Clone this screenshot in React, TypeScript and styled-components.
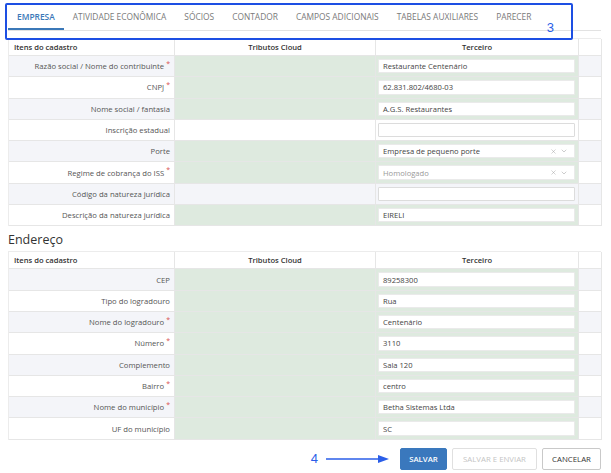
import React from "react";
import styled, { createGlobalStyle, css } from "styled-components";
import { X, ChevronDown } from "lucide-react";

const Global = createGlobalStyle`
  html, body { margin: 0; padding: 0; background: #fff; }
  body { font-family: "Open Sans", "Liberation Sans", sans-serif; color: #444; }
`;

const Page = styled.div`
  position: relative;
  width: 611px;
  padding: 0 10px 0 8px;
  box-sizing: border-box;
`;

const TabBar = styled.div`
  display: flex;
  height: 30px;
  border-bottom: 1px solid #e2e2e2;
  box-sizing: content-box;
`;

const Tab = styled.div<{ $active?: boolean }>`
  padding: 10px 9px 0;
  height: 30px;
  box-sizing: border-box;
  font-size: 8.4px;
  line-height: 14px;
  text-transform: uppercase;
  white-space: nowrap;
  color: ${(p) => (p.$active ? "#3b78b8" : "#7a7a7a")};
  font-weight: ${(p) => (p.$active ? 600 : 400)};
  border-bottom: 2px solid ${(p) => (p.$active ? "#3b78b8" : "transparent")};
  margin-bottom: -1px;
`;

const Annot = styled.div`
  position: absolute;
  left: 5px;
  top: 3px;
  width: 568px;
  height: 37px;
  border: 2px solid #1d4fe3;
  border-radius: 2px;
  box-sizing: border-box;
  pointer-events: none;
`;

const AnnotNum = styled.span`
  position: absolute;
  right: 17px;
  top: 15px;
  font-family: "Liberation Sans", sans-serif;
  font-size: 13px;
  color: #2a5ee8;
`;

const Table = styled.div<{ $top: number }>`
  margin-top: ${(p) => p.$top}px;
  display: grid;
  grid-template-columns: 166px 201px 203px 23px;
  border-left: 1px solid #ececec;
  border-top: 1px solid #ececec;
`;

const HeadCell = styled.div<{ $align?: string }>`
  height: 17px;
  box-sizing: border-box;
  display: flex;
  align-items: center;
  justify-content: ${(p) => p.$align || "center"};
  padding: 0 5px;
  font-size: 7.6px;
  font-weight: 600;
  color: #333;
  border-right: 1px solid #e6e6e6;
  border-bottom: 1px solid #e6e6e6;
  white-space: nowrap;
`;

const cellBase = css`
  height: 21.3px;
  box-sizing: border-box;
  border-right: 1px solid #e6e6e6;
  border-bottom: 1px solid #e6e6e6;
`;

const LabelCell = styled.div<{ $stripe: boolean }>`
  ${cellBase}
  background: ${(p) => (p.$stripe ? "#f4f5f9" : "#fff")};
  display: flex;
  align-items: center;
  justify-content: flex-end;
  padding-right: 4px;
  font-size: 7.7px;
  color: #555;
  white-space: nowrap;
`;

const Req = styled.span`
  color: #d9534f;
  font-size: 7px;
  margin-left: 2px;
  align-self: flex-start;
  margin-top: 3px;
`;

const fill = (green: boolean, stripe: boolean) =>
  green ? "#deeadf" : stripe ? "#f4f5f9" : "#fff";

const SourceCell = styled.div<{ $green: boolean; $stripe: boolean }>`
  ${cellBase}
  background: ${(p) => fill(p.$green, p.$stripe)};
`;

const ValueCell = styled.div<{ $green: boolean; $stripe: boolean }>`
  ${cellBase}
  background: ${(p) => fill(p.$green, p.$stripe)};
  padding: 3px 3px 3px 2px;
  display: flex;
`;

const ExtraCell = styled.div<{ $stripe: boolean }>`
  ${cellBase}
  background: ${(p) => (p.$stripe ? "#f4f5f9" : "#fff")};
`;

const Field = styled.div<{ $muted?: boolean; $strong?: boolean }>`
  flex: 1;
  display: flex;
  align-items: center;
  background: #fff;
  border: 1px solid ${(p) => (p.$strong ? "#dcdcdc" : "#eaeaea")};
  border-radius: 1px;
  padding: 0 4px;
  font-size: 7.6px;
  color: ${(p) => (p.$muted ? "#999" : "#444")};
  white-space: nowrap;
`;

const FieldText = styled.span`
  flex: 1;
`;

const Icons = styled.span`
  display: flex;
  align-items: center;
  gap: 3px;
  color: #9a9a9a;
  padding-right: 2px;
`;

const SectionTitle = styled.div`
  font-size: 12.5px;
  color: #333;
  height: 25px;
  line-height: 27px;
`;

const Footer = styled.div`
  display: flex;
  justify-content: flex-end;
  align-items: center;
  margin-top: 8px;
  gap: 5px;
`;

const Btn = styled.button<{ $variant: "primary" | "disabled" | "default" }>`
  height: 22px;
  box-sizing: border-box;
  padding: 0 6px;
  font-family: "Open Sans", "Liberation Sans", sans-serif;
  font-size: 7.8px;
  text-transform: uppercase;
  border-radius: 2px;
  cursor: pointer;
  ${(p) =>
    p.$variant === "primary"
      ? css`
          background: #3a78bd;
          border: 1px solid #3a78bd;
          color: #fff;
          font-weight: 600;
          width: 47px;
        `
      : p.$variant === "disabled"
      ? css`
          background: #fff;
          border: 1px solid #e0e0e0;
          color: #c4c4c4;
          width: 85px;
        `
      : css`
          background: #fff;
          border: 1px solid #c9c9c9;
          color: #333;
          width: 59px;
        `}
`;

const StepNote = styled.div`
  display: flex;
  align-items: center;
  gap: 8px;
  margin-right: 5px;
  color: #2a5ee8;
  font-family: "Liberation Sans", sans-serif;
  font-size: 13px;
`;

type Row = {
  label: string;
  req?: boolean;
  green: boolean;
  value: string;
  select?: boolean;
  muted?: boolean;
};

const rows1: Row[] = [
  { label: "Razão social / Nome do contribuinte", req: true, green: true, value: "Restaurante Centenário" },
  { label: "CNPJ", req: true, green: true, value: "62.831.802/4680-03" },
  { label: "Nome social / fantasia", green: true, value: "A.G.S. Restaurantes" },
  { label: "Inscrição estadual", green: false, value: "" },
  { label: "Porte", green: true, value: "Empresa de pequeno porte", select: true },
  { label: "Regime de cobrança do ISS", req: true, green: true, value: "Homologado", select: true, muted: true },
  { label: "Código da natureza jurídica", green: false, value: "" },
  { label: "Descrição da natureza jurídica", green: true, value: "EIRELI" },
];

const rows2: Row[] = [
  { label: "CEP", green: true, value: "89258300" },
  { label: "Tipo do logradouro", green: true, value: "Rua" },
  { label: "Nome do logradouro", req: true, green: true, value: "Centenário" },
  { label: "Número", req: true, green: true, value: "3110" },
  { label: "Complemento", green: true, value: "Sala 120" },
  { label: "Bairro", req: true, green: true, value: "centro" },
  { label: "Nome do município", req: true, green: true, value: "Betha Sistemas Ltda" },
  { label: "UF do município", green: true, value: "SC" },
];

function DataTable({ rows, top }: { rows: Row[]; top: number }) {
  return (
    <Table $top={top}>
      <HeadCell $align="flex-start">Itens do cadastro</HeadCell>
      <HeadCell>Tributos Cloud</HeadCell>
      <HeadCell>Terceiro</HeadCell>
      <HeadCell />
      {rows.map((r, i) => {
        const stripe = i % 2 === 0;
        return (
          <React.Fragment key={r.label}>
            <LabelCell $stripe={stripe}>
              {r.label}
              {r.req && <Req>*</Req>}
            </LabelCell>
            <SourceCell $green={r.green} $stripe={stripe} />
            <ValueCell $green={r.green} $stripe={stripe}>
              <Field $muted={r.muted} $strong={!r.green}>
                <FieldText>{r.value}</FieldText>
                {r.select && (
                  <Icons>
                    <X size={7} strokeWidth={1.5} />
                    <ChevronDown size={8} strokeWidth={1.5} />
                  </Icons>
                )}
              </Field>
            </ValueCell>
            <ExtraCell $stripe={stripe} />
          </React.Fragment>
        );
      })}
    </Table>
  );
}

const tabs = [
  "Empresa",
  "Atividade econômica",
  "Sócios",
  "Contador",
  "Campos adicionais",
  "Tabelas auxiliares",
  "Parecer",
];

export default function App() {
  return (
    <>
      <Global />
      <Page>
        <TabBar>
          {tabs.map((t, i) => (
            <Tab key={t} $active={i === 0}>
              {t}
            </Tab>
          ))}
        </TabBar>
        <Annot>
          <AnnotNum>3</AnnotNum>
        </Annot>
        <DataTable rows={rows1} top={7} />
        <SectionTitle>Endereço</SectionTitle>
        <DataTable rows={rows2} top={0} />
        <Footer>
          <StepNote>
            4
            <svg width="64" height="10" viewBox="0 0 64 10">
              <line x1="0" y1="5" x2="56" y2="5" stroke="#2a5ee8" strokeWidth="1.6" />
              <path d="M52 1 L63 5 L52 9 Z" fill="#2a5ee8" />
            </svg>
          </StepNote>
          <Btn $variant="primary">Salvar</Btn>
          <Btn $variant="disabled">Salvar e enviar</Btn>
          <Btn $variant="default">Cancelar</Btn>
        </Footer>
      </Page>
    </>
  );
}
